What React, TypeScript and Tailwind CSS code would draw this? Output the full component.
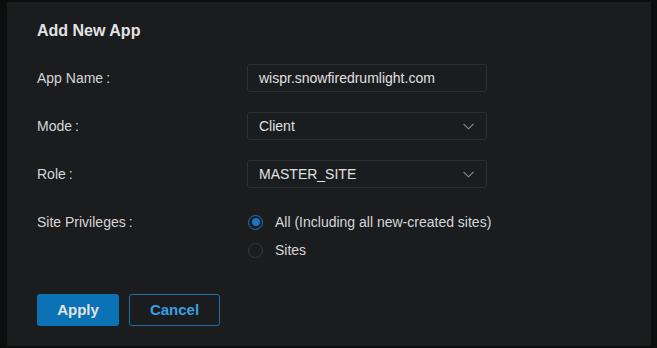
import React from "react";

const fields = [
  { label: "App Name", value: "wispr.snowfiredrumlight.com", select: false },
  { label: "Mode", value: "Client", select: true },
  { label: "Role", value: "MASTER_SITE", select: true },
];

function Chevron() {
  return (
    <svg width="11" height="7" viewBox="0 0 11 7" fill="none" className="text-[#8f9092]">
      <path d="M0.5 0.8l5 5 5-5" stroke="currentColor" strokeWidth="1.1" />
    </svg>
  );
}

function Label({ text }: { text: string }) {
  return (
    <span className="text-[14px] text-[#d6d6d6]">
      {text}
      <span className="ml-[3px]">:</span>
    </span>
  );
}

function Radio({ checked, label }: { checked: boolean; label: string }) {
  return (
    <div className="flex h-7 items-center gap-[12px]">
      <span
        className={
          checked
            ? "flex h-[15px] w-[15px] items-center justify-center rounded-full border-[1.5px] border-[#1a74c4]"
            : "flex h-[15px] w-[15px] items-center justify-center rounded-full border border-[#3a3b3e]"
        }
      >
        {checked && <span className="h-[8px] w-[8px] rounded-full bg-[#1a74c4]" />}
      </span>
      <span className="text-[14px] text-[#d6d6d6]">{label}</span>
    </div>
  );
}

export default function App() {
  return (
    <div
      className="h-[348px] w-[657px] bg-[#0c0d0d] pt-[2px] pl-[7px]"
      style={{ fontFamily: '"Liberation Sans", Arial, sans-serif' }}
    >
      <div className="h-[344px] w-[644px] bg-[#1b1c1e] px-[30px] pt-[19px]">
        <h2 className="text-[16px] leading-5 font-bold text-[#e2e2e2]">Add New App</h2>

        <div className="mt-[23px] flex flex-col gap-5">
          {fields.map((f) => (
            <div key={f.label} className="flex items-center">
              <div className="w-[210px]">
                <Label text={f.label} />
              </div>
              <div className="flex h-7 w-[240px] items-center justify-between rounded-[3px] border border-[#2e2f32] pr-[12px] pl-[11px] text-[14px] text-[#e0e0e0]">
                <span>{f.value}</span>
                {f.select && <Chevron />}
              </div>
            </div>
          ))}

          <div className="flex">
            <div className="flex h-7 w-[210px] items-center">
              <Label text="Site Privileges" />
            </div>
            <div className="flex flex-col pl-[1px]">
              <Radio checked label="All (Including all new-created sites)" />
              <Radio checked={false} label="Sites" />
            </div>
          </div>
        </div>

        <div className="mt-[30px] flex gap-[10px]">
          <button className="h-8 w-[82px] rounded-[3px] bg-[#0b72b6] text-[15px] font-bold text-[#e4e4e4]">
            Apply
          </button>
          <button className="h-8 w-[91px] rounded-[3px] border border-[#1c6fa8] text-[15px] font-bold text-[#39a0e4]">
            Cancel
          </button>
        </div>
      </div>
    </div>
  );
}
